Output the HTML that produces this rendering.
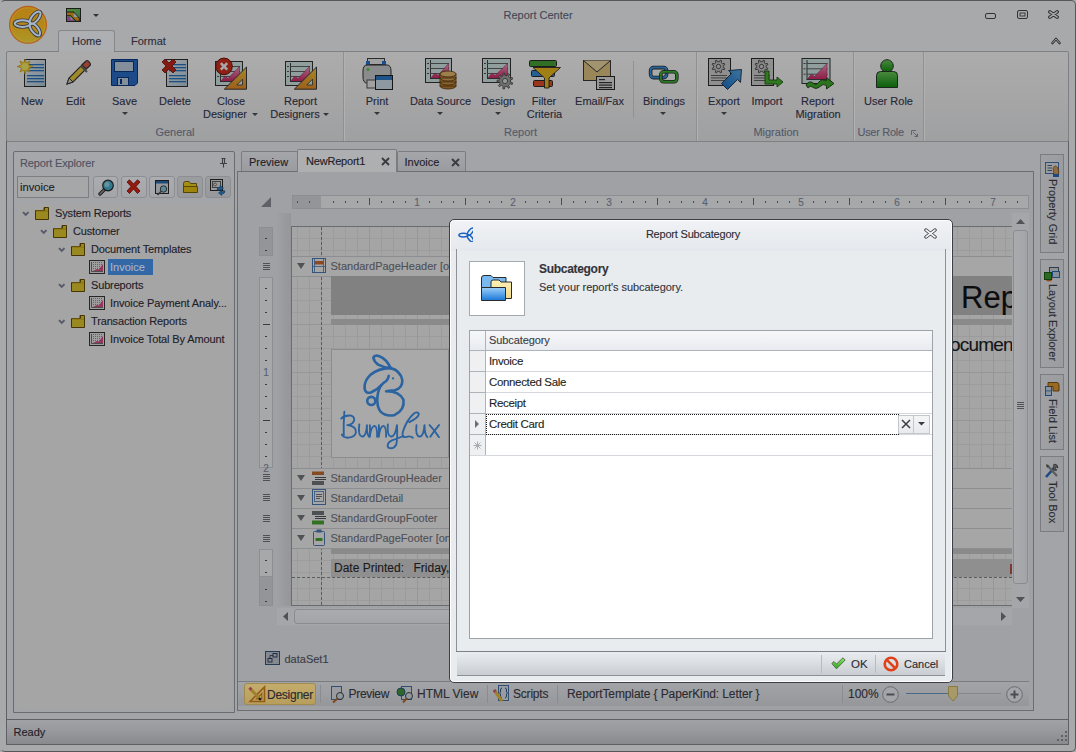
<!DOCTYPE html>
<html><head><meta charset="utf-8"><style>
*{box-sizing:border-box;margin:0;padding:0}
html,body{width:1076px;height:752px;overflow:hidden}
body{position:relative;background:#a7a8aa;font-family:"Liberation Sans",sans-serif;font-size:11px;color:#2e3036}
.a{position:absolute}
.t{position:absolute;white-space:nowrap;line-height:13px;-webkit-text-stroke:0.12px currentColor}
.dim{filter:brightness(.66)}
</style></head><body>
<div class="a" style="left:0px;top:0px;width:1076px;height:752px;border:1px solid #55575b;border-left-color:#a8a9ab;border-radius:5px;background:#a8a9ab"></div>
<div class="t" style="left:438px;width:200px;text-align:center;top:8.7px;font-size:11px;color:#424856;">Report Center</div>
<svg class="a" style="left:8px;top:5px;" width="40" height="40" viewBox="0 0 40 40">
<defs><linearGradient id="orbg" x1="0" y1="0" x2="0" y2="1"><stop offset="0" stop-color="#b88014"/><stop offset=".55" stop-color="#b48818"/><stop offset="1" stop-color="#aa982a"/></linearGradient></defs>
<circle cx="20" cy="19.8" r="18.4" fill="url(#orbg)" stroke="#b8601a" stroke-width="1.2"/>
<circle cx="20" cy="19.8" r="17" fill="none" stroke="#c8a040" stroke-width=".6" opacity=".7"/>
<g fill="none" stroke="#3c3c44" stroke-width="3.8"><ellipse cx="14.6" cy="18.6" rx="7.9" ry="3.3"/><ellipse cx="27.1" cy="12.8" rx="7.6" ry="3.3" transform="rotate(-50.6 27.1 12.8)"/><ellipse cx="26.9" cy="24.4" rx="7.4" ry="3.3" transform="rotate(52 26.9 24.4)"/></g>
<g fill="none" stroke="#a4b6c8" stroke-width="2.0"><ellipse cx="14.6" cy="18.6" rx="7.9" ry="3.3"/><ellipse cx="27.1" cy="12.8" rx="7.6" ry="3.3" transform="rotate(-50.6 27.1 12.8)"/><ellipse cx="26.9" cy="24.4" rx="7.4" ry="3.3" transform="rotate(52 26.9 24.4)"/></g></svg>
<svg class="a" style="left:66px;top:8px;filter:brightness(.66)" width="15" height="14" viewBox="0 0 15 14"><defs><linearGradient id="qg" x1="0" y1="0" x2="1" y2="1"><stop offset="0" stop-color="#78d858"/><stop offset=".6" stop-color="#68c060"/><stop offset="1" stop-color="#3a90e0"/></linearGradient></defs>
<rect x="0.5" y="0.5" width="14" height="13" fill="url(#qg)" stroke="#2a2a2a"/>
<path d="M1 3.6 H7.6 L13.6 9.8 V13.5 H9.8 L4.6 8 H1Z" fill="#2a2a2a"/>
<path d="M1 4.4 H7.2 L12.8 10 V12.8 H10.2 L4.8 7.2 H1Z" fill="#f0a018"/>
<path d="M7.8 4.8 L11.8 9 H7.8Z" fill="#d8e8f0"/>
<path d="M1 8.4 H3.8 L8.6 13.1 H1Z" fill="#c068c0"/>
<path d="M4.6 9 L7 11.4 H4.6Z" fill="#d8e8f0"/></svg>
<svg class="a" style="left:93px;top:14px;" width="7" height="4" viewBox="0 0 7 4"><path d="M0 0 L6 0 L3 3Z" fill="#303236"/></svg>
<svg class="a" style="left:985px;top:13px;" width="12" height="7" viewBox="0 0 12 7"><rect x="0.5" y="0.5" width="10" height="5" rx="1.5" fill="none" stroke="#303236"/></svg>
<svg class="a" style="left:1017px;top:10px;" width="12" height="10" viewBox="0 0 12 10"><rect x="0.5" y="0.5" width="10" height="8" rx="1.5" fill="none" stroke="#303236"/><rect x="3" y="3" width="5" height="3" fill="none" stroke="#303236" stroke-width=".9"/></svg>
<svg class="a" style="left:1048px;top:10px;" width="11" height="9" viewBox="0 0 11 9"><path d="M1.9 1.9 L9.1 7.1 M9.1 1.9 L1.9 7.1" stroke="#303236" stroke-width="3.6" stroke-linecap="round"/><path d="M1.9 1.9 L9.1 7.1 M9.1 1.9 L1.9 7.1" stroke="#a8a9ab" stroke-width="1.5" stroke-linecap="round"/></svg>
<div class="a" style="left:58px;top:30px;width:57px;height:22px;border:1px solid #85878b;border-bottom:none;border-radius:3px 3px 0 0;background:linear-gradient(#aeafb2,#adaeb1)"></div>
<div class="t" style="left:72px;top:35.2px;font-size:11px;color:#2c2d3a;">Home</div>
<div class="t" style="left:131px;top:35.2px;font-size:11px;color:#2c2d3a;">Format</div>
<svg class="a" style="left:1051px;top:37px;" width="10" height="8" viewBox="0 0 10 8"><path d="M1.5 6 L5 2 L8.5 6" fill="none" stroke="#303236" stroke-width="2.6" stroke-linejoin="round" stroke-linecap="round"/><path d="M1.5 6 L5 2 L8.5 6" fill="none" stroke="#a8a9ab" stroke-width="0.9" stroke-linecap="round"/></svg>
<div class="a" style="left:6px;top:141px;width:1063px;height:579px;border-left:1px solid #5e6064;border-right:1px solid #5e6064;background:#a3a4a7"></div>
<div class="a" style="left:6px;top:51px;width:1063px;height:91px;border:1px solid #7e8084;border-radius:2px;background:linear-gradient(#acacad,#a5a5a6 60%,#9fa0a1)"></div>
<div class="a" style="left:59px;top:51px;width:55px;height:1px;background:#acacad"></div>
<div class="a" style="left:343px;top:52px;width:1px;height:89px;background:#8e9094"></div>
<div class="a" style="left:344px;top:52px;width:1px;height:89px;background:#b0b1b3"></div>
<div class="a" style="left:696px;top:52px;width:1px;height:89px;background:#8e9094"></div>
<div class="a" style="left:697px;top:52px;width:1px;height:89px;background:#b0b1b3"></div>
<div class="a" style="left:853px;top:52px;width:1px;height:89px;background:#8e9094"></div>
<div class="a" style="left:854px;top:52px;width:1px;height:89px;background:#b0b1b3"></div>
<div class="a" style="left:923px;top:52px;width:1px;height:89px;background:#8e9094"></div>
<div class="a" style="left:924px;top:52px;width:1px;height:89px;background:#b0b1b3"></div>
<div class="a" style="left:633px;top:61px;width:1px;height:57px;background:#909296"></div>
<div class="t" style="left:75px;width:200px;text-align:center;top:126.2px;font-size:11px;color:#545a6a;">General</div>
<div class="t" style="left:420.5px;width:200px;text-align:center;top:126.2px;font-size:11px;color:#545a6a;">Report</div>
<div class="t" style="left:676px;width:200px;text-align:center;top:126.2px;font-size:11px;color:#545a6a;">Migration</div>
<div class="t" style="left:857.5px;top:126.2px;font-size:11px;color:#545a6a;letter-spacing:-0.3px">User Role</div>
<svg class="a" style="left:911px;top:130px;" width="8" height="8" viewBox="0 0 8 8"><path d="M0.5 0.5 H5 M0.5 0.5 V5" stroke="#5e6474" fill="none"/><path d="M2 2 L6.5 6.5 M3.5 6.5 H6.5 V3.5" stroke="#5e6474" fill="none"/></svg>
<svg class="a" style="left:16px;top:57px;filter:brightness(.66)" width="32" height="32" viewBox="0 0 32 32"><defs><linearGradient id="docg" x1="0" y1="0" x2="1" y2="1"><stop offset="0" stop-color="#f4f8fb"/><stop offset="1" stop-color="#b9cfe0"/></linearGradient></defs><rect x="8.5" y="2.5" width="21" height="27" fill="url(#docg)" stroke="#2e2e2e"/><rect x="11" y="7" width="17" height="1.3" fill="#2a78c4"/><rect x="11" y="10" width="17" height="1.3" fill="#2a78c4"/><rect x="11" y="13" width="17" height="1.3" fill="#2a78c4"/><rect x="11" y="18" width="17" height="1.3" fill="#2a78c4"/><rect x="11" y="21" width="17" height="1.3" fill="#2a78c4"/><rect x="11" y="24" width="17" height="1.3" fill="#2a78c4"/><path d="M9 2 L10.3 6 L14 4 L12.5 8 L17 9.5 L12.5 11 L14 15 L10.3 13 L9 17 L7.7 13 L4 15 L5.5 11 L1 9.5 L5.5 8 L4 4 L7.7 6Z" fill="#ffe030" stroke="#d8a000" stroke-width=".7"/><circle cx="9" cy="9.5" r="3.5" fill="#fff470"/></svg>
<div class="t" style="left:-68px;width:200px;text-align:center;top:94.7px;font-size:11px;color:#262736;">New</div>
<svg class="a" style="left:60px;top:57px;filter:brightness(.66)" width="32" height="32" viewBox="0 0 32 32"><path d="M7 27 L9 21 L24 6 L28 10 L13 25Z" fill="#f2d040" stroke="#3a3a3a" stroke-width="1.2"/><path d="M22 8 L26 4 Q28 3 29 5 L30 6 Q31 8 29.5 9 L26 12Z" fill="#e8604a" stroke="#3a3a3a" stroke-width="1.2"/><path d="M21 9 L27 15" stroke="#6a6a6a" stroke-width="2"/><path d="M7 27 L9 21 L13 25Z" fill="#d8d8d8" stroke="#3a3a3a" stroke-width="1"/></svg>
<div class="t" style="left:-24.5px;width:200px;text-align:center;top:94.7px;font-size:11px;color:#262736;">Edit</div>
<svg class="a" style="left:108px;top:57px;filter:brightness(.66)" width="32" height="32" viewBox="0 0 32 32"><path d="M3.5 2.5 H29.5 V26 L27 28.5 H3.5Z" fill="#2c72d0" stroke="#0c3c8c"/><rect x="6.5" y="4.5" width="19" height="10" fill="#c6d8ea" stroke="#0c3c8c"/><rect x="9.5" y="20.5" width="11" height="8" fill="#c6d8ea" stroke="#0c3c8c"/><rect x="12" y="22" width="2" height="5" fill="#0c3c8c"/></svg>
<div class="t" style="left:24.5px;width:200px;text-align:center;top:94.7px;font-size:11px;color:#262736;">Save</div>
<svg class="a" style="left:121.5px;top:112px;" width="7" height="4" viewBox="0 0 7 4"><path d="M0 0 L6 0 L3 3Z" fill="#34363a"/></svg>
<svg class="a" style="left:159px;top:57px;filter:brightness(.66)" width="32" height="32" viewBox="0 0 32 32"><defs><linearGradient id="docg" x1="0" y1="0" x2="1" y2="1"><stop offset="0" stop-color="#f4f8fb"/><stop offset="1" stop-color="#b9cfe0"/></linearGradient></defs><rect x="7.5" y="2.5" width="21" height="27" fill="url(#docg)" stroke="#2e2e2e"/><rect x="10" y="7" width="17" height="1.3" fill="#2a78c4"/><rect x="10" y="10" width="17" height="1.3" fill="#2a78c4"/><rect x="10" y="13" width="17" height="1.3" fill="#2a78c4"/><rect x="10" y="18" width="17" height="1.3" fill="#2a78c4"/><rect x="10" y="21" width="17" height="1.3" fill="#2a78c4"/><rect x="10" y="24" width="17" height="1.3" fill="#2a78c4"/><path d="M3 5 L6 2 L10 6 L14 2 L17 5 L13 9 L17 13 L14 16 L10 12 L6 16 L3 13 L7 9Z" fill="#c8281c" stroke="#7a1008" stroke-width=".8"/></svg>
<div class="t" style="left:75px;width:200px;text-align:center;top:94.7px;font-size:11px;color:#262736;">Delete</div>
<svg class="a" style="left:215px;top:57px;filter:brightness(.66)" width="34" height="34" viewBox="0 0 34 34"><defs><linearGradient id="pk" x1="0" y1="0" x2="0" y2="1"><stop offset="0" stop-color="#f8a0c8"/><stop offset="1" stop-color="#d82868"/></linearGradient><linearGradient id="tg" x1="0" y1="0" x2="0" y2="1"><stop offset="0" stop-color="#f8d040"/><stop offset="1" stop-color="#f09028"/></linearGradient></defs><rect x="0.5" y="4.5" width="27" height="24" fill="#dcefef" stroke="#333" stroke-width="1"/><path d="M5.5 6 V24" stroke="#444" stroke-width="1"/><path d="M5 9.5 H25" stroke="#555" stroke-width=".9"/><path d="M2 9.5 H4" stroke="#555" stroke-width="1"/><path d="M5 14.5 H25" stroke="#555" stroke-width=".9"/><path d="M2 14.5 H4" stroke="#555" stroke-width="1"/><path d="M5 19.5 H25" stroke="#555" stroke-width=".9"/><path d="M2 19.5 H4" stroke="#555" stroke-width="1"/><path d="M5.5 24.5 L10 19 L13 21.5 L24.5 9.5 V24.5Z" fill="url(#pk)" stroke="#902050" stroke-width=".5"/><path d="M5 24.5 H25" stroke="#444" stroke-width="1"/><path d="M9.3 32.2 H31.5 V10Z" fill="url(#tg)" stroke="#3a3a3a" stroke-width="1"/><path d="M21.8 28 H27.5 V22.2Z" fill="#dcefef" stroke="#3a3a3a" stroke-width=".8"/><circle cx="9" cy="9.4" r="8.3" fill="#d83020" stroke="#701008"/><path d="M5.8 6.2 L12.2 12.6 M12.2 6.2 L5.8 12.6" stroke="#fff" stroke-width="2.6"/></svg>
<div class="t" style="left:131px;width:200px;text-align:center;top:94.7px;font-size:11px;color:#262736;">Close</div>
<div class="t" style="left:125px;width:200px;text-align:center;top:107.7px;font-size:11px;color:#262736;">Designer</div>
<svg class="a" style="left:251.5px;top:113px;" width="7" height="4" viewBox="0 0 7 4"><path d="M0 0 L6 0 L3 3Z" fill="#34363a"/></svg>
<svg class="a" style="left:285px;top:57px;filter:brightness(.66)" width="34" height="34" viewBox="0 0 34 34"><defs><linearGradient id="pk" x1="0" y1="0" x2="0" y2="1"><stop offset="0" stop-color="#f8a0c8"/><stop offset="1" stop-color="#d82868"/></linearGradient><linearGradient id="tg" x1="0" y1="0" x2="0" y2="1"><stop offset="0" stop-color="#f8d040"/><stop offset="1" stop-color="#f09028"/></linearGradient></defs><rect x="0.5" y="4.5" width="27" height="24" fill="#dcefef" stroke="#333" stroke-width="1"/><path d="M5.5 6 V24" stroke="#444" stroke-width="1"/><path d="M5 9.5 H25" stroke="#555" stroke-width=".9"/><path d="M2 9.5 H4" stroke="#555" stroke-width="1"/><path d="M5 14.5 H25" stroke="#555" stroke-width=".9"/><path d="M2 14.5 H4" stroke="#555" stroke-width="1"/><path d="M5 19.5 H25" stroke="#555" stroke-width=".9"/><path d="M2 19.5 H4" stroke="#555" stroke-width="1"/><path d="M5.5 24.5 L10 19 L13 21.5 L24.5 9.5 V24.5Z" fill="url(#pk)" stroke="#902050" stroke-width=".5"/><path d="M5 24.5 H25" stroke="#444" stroke-width="1"/><path d="M9.3 32.2 H31.5 V10Z" fill="url(#tg)" stroke="#3a3a3a" stroke-width="1"/><path d="M21.8 28 H27.5 V22.2Z" fill="#dcefef" stroke="#3a3a3a" stroke-width=".8"/></svg>
<div class="t" style="left:200.5px;width:200px;text-align:center;top:94.7px;font-size:11px;color:#262736;">Report</div>
<div class="t" style="left:195px;width:200px;text-align:center;top:107.7px;font-size:11px;color:#262736;">Designers</div>
<svg class="a" style="left:323px;top:113px;" width="7" height="4" viewBox="0 0 7 4"><path d="M0 0 L6 0 L3 3Z" fill="#34363a"/></svg>
<svg class="a" style="left:361px;top:57px;filter:brightness(.66)" width="34" height="34" viewBox="0 0 34 34"><rect x="6.5" y="1.5" width="17" height="6" fill="#f4f4f4" stroke="#444"/><rect x="5" y="4" width="4" height="5" fill="#2a78d8"/><rect x="21" y="4" width="4" height="5" fill="#2a78d8"/><path d="M6 8 H26 Q30 8 30 14 V26 H6 Q2 26 2 20 V14 Q2 8 6 8Z" fill="#cfd2d4" stroke="#333"/><circle cx="7" cy="12.5" r="1.5" fill="#5ad040"/><rect x="6" y="23" width="10" height="8" fill="#f4f4f4" stroke="#555"/><rect x="14.5" y="18.5" width="17" height="14" fill="#d6e6f2" stroke="#222"/><rect x="15" y="19" width="16" height="4" fill="#2a80d0"/></svg>
<div class="t" style="left:277px;width:200px;text-align:center;top:94.7px;font-size:11px;color:#262736;">Print</div>
<svg class="a" style="left:373.5px;top:112px;" width="7" height="4" viewBox="0 0 7 4"><path d="M0 0 L6 0 L3 3Z" fill="#34363a"/></svg>
<svg class="a" style="left:424px;top:57px;filter:brightness(.66)" width="36" height="34" viewBox="0 0 36 34"><defs><linearGradient id="pk" x1="0" y1="0" x2="0" y2="1"><stop offset="0" stop-color="#f8a0c8"/><stop offset="1" stop-color="#d82868"/></linearGradient><linearGradient id="tg" x1="0" y1="0" x2="0" y2="1"><stop offset="0" stop-color="#f8d040"/><stop offset="1" stop-color="#f09028"/></linearGradient></defs><rect x="1.5" y="1.5" width="26" height="24" fill="#dcefef" stroke="#333" stroke-width="1"/><path d="M6.5 3 V21" stroke="#444" stroke-width="1"/><path d="M6 6.5 H25" stroke="#555" stroke-width=".9"/><path d="M3 6.5 H5" stroke="#555" stroke-width="1"/><path d="M6 11.5 H25" stroke="#555" stroke-width=".9"/><path d="M3 11.5 H5" stroke="#555" stroke-width="1"/><path d="M6 16.5 H25" stroke="#555" stroke-width=".9"/><path d="M3 16.5 H5" stroke="#555" stroke-width="1"/><path d="M6.5 21.5 L11 16 L14 18.5 L24.5 6.5 V21.5Z" fill="url(#pk)" stroke="#902050" stroke-width=".5"/><path d="M6 21.5 H25" stroke="#444" stroke-width="1"/><g stroke="#5a3a10" stroke-width=".8"><ellipse cx="24" cy="29" rx="8" ry="3" fill="#c08030"/><rect x="16" y="25" width="16" height="4" fill="#d09040"/><ellipse cx="24" cy="25" rx="8" ry="3" fill="#d89a48"/><rect x="16" y="21" width="16" height="4" fill="#d09040"/><ellipse cx="24" cy="21" rx="8" ry="3" fill="#e0aa58"/><rect x="16" y="17" width="16" height="4" fill="#d09040"/><ellipse cx="24" cy="17" rx="8" ry="3" fill="#f0c070"/></g></svg>
<div class="t" style="left:340.5px;width:200px;text-align:center;top:94.7px;font-size:11px;color:#262736;">Data Source</div>
<svg class="a" style="left:436.5px;top:112px;" width="7" height="4" viewBox="0 0 7 4"><path d="M0 0 L6 0 L3 3Z" fill="#34363a"/></svg>
<svg class="a" style="left:482px;top:57px;filter:brightness(.66)" width="34" height="34" viewBox="0 0 34 34"><defs><linearGradient id="pk" x1="0" y1="0" x2="0" y2="1"><stop offset="0" stop-color="#f8a0c8"/><stop offset="1" stop-color="#d82868"/></linearGradient><linearGradient id="tg" x1="0" y1="0" x2="0" y2="1"><stop offset="0" stop-color="#f8d040"/><stop offset="1" stop-color="#f09028"/></linearGradient></defs><rect x="0.5" y="1.5" width="28" height="24" fill="#dcefef" stroke="#333" stroke-width="1"/><path d="M5.5 3 V21" stroke="#444" stroke-width="1"/><path d="M5 6.5 H26" stroke="#555" stroke-width=".9"/><path d="M2 6.5 H4" stroke="#555" stroke-width="1"/><path d="M5 11.5 H26" stroke="#555" stroke-width=".9"/><path d="M2 11.5 H4" stroke="#555" stroke-width="1"/><path d="M5 16.5 H26" stroke="#555" stroke-width=".9"/><path d="M2 16.5 H4" stroke="#555" stroke-width="1"/><path d="M5.5 21.5 L10 16 L13 18.5 L25.5 6.5 V21.5Z" fill="url(#pk)" stroke="#902050" stroke-width=".5"/><path d="M5 21.5 H26" stroke="#444" stroke-width="1"/><path d="M28.60 24.00 L28.50 25.07 L30.76 25.96 L30.20 27.48 L27.90 26.71 L27.29 27.60 L26.52 28.35 L27.68 30.49 L26.28 31.30 L25.01 29.23 L23.97 29.51 L22.90 29.60 L22.41 31.98 L20.82 31.70 L21.18 29.29 L20.20 28.85 L19.33 28.23 L17.42 29.74 L16.38 28.50 L18.20 26.88 L17.74 25.92 L17.47 24.88 L15.04 24.81 L15.04 23.19 L17.47 23.12 L17.74 22.08 L18.20 21.12 L16.38 19.50 L17.42 18.26 L19.33 19.77 L20.20 19.15 L21.18 18.71 L20.82 16.30 L22.41 16.02 L22.90 18.40 L23.97 18.49 L25.01 18.77 L26.28 16.70 L27.68 17.51 L26.52 19.65 L27.29 20.40 L27.90 21.29 L30.20 20.52 L30.76 22.04 L28.50 22.93Z" fill="#a8a8a8" stroke="#555" stroke-width=".9"/><circle cx="23" cy="24" r="2.6" fill="#dfeaee" stroke="#555" stroke-width=".9"/></svg>
<div class="t" style="left:398px;width:200px;text-align:center;top:94.7px;font-size:11px;color:#262736;">Design</div>
<svg class="a" style="left:494.5px;top:112px;" width="7" height="4" viewBox="0 0 7 4"><path d="M0 0 L6 0 L3 3Z" fill="#34363a"/></svg>
<svg class="a" style="left:528px;top:57px;filter:brightness(.66)" width="34" height="34" viewBox="0 0 34 34"><rect x="1.5" y="3.5" width="27" height="6" rx="1" fill="#4aa838" stroke="#2a2a2a"/><rect x="3.5" y="13.5" width="23" height="6" rx="1" fill="#3a90e0" stroke="#2a2a2a"/><rect x="5.5" y="23.5" width="19" height="6" rx="1" fill="#e8502a" stroke="#2a2a2a"/><path d="M5 10.5 H32.5 L21 21 V31 H16.5 V21Z" fill="#f2c020" stroke="#2a2a2a" stroke-width=".9"/></svg>
<div class="t" style="left:444px;width:200px;text-align:center;top:94.7px;font-size:11px;color:#262736;">Filter</div>
<div class="t" style="left:444.5px;width:200px;text-align:center;top:107.7px;font-size:11px;color:#262736;">Criteria</div>
<svg class="a" style="left:582px;top:57px;filter:brightness(.66)" width="34" height="34" viewBox="0 0 34 34"><rect x="1.5" y="3.5" width="27" height="20" fill="#e8cc88" stroke="#3a3a3a"/><path d="M1.5 3.5 L15 15 L28.5 3.5" fill="#f4e0a8" stroke="#3a3a3a"/><rect x="14.5" y="19.5" width="18" height="13" fill="#e8e8e8" stroke="#2a2a2a"/><rect x="17" y="22" width="6" height="1.2" fill="#333"/><rect x="17" y="25" width="13" height="1.2" fill="#333"/><rect x="17" y="27.5" width="13" height="1.2" fill="#333"/><rect x="17" y="30" width="13" height="1.2" fill="#333"/></svg>
<div class="t" style="left:499.5px;width:200px;text-align:center;top:94.7px;font-size:11px;color:#262736;">Email/Fax</div>
<svg class="a" style="left:648px;top:65px;filter:brightness(.66)" width="32" height="20" viewBox="0 0 32 20"><rect x="2.6" y="2.6" width="16" height="10" rx="3" fill="none" stroke="#2a2a2a" stroke-width="3.6"/><rect x="2.6" y="2.6" width="16" height="10" rx="3" fill="none" stroke="#3a98e8" stroke-width="2"/><rect x="12.8" y="6.8" width="16" height="10" rx="3" fill="none" stroke="#2a2a2a" stroke-width="3.6"/><rect x="12.8" y="6.8" width="16" height="10" rx="3" fill="none" stroke="#40b838" stroke-width="2"/></svg>
<div class="t" style="left:564px;width:200px;text-align:center;top:94.7px;font-size:11px;color:#262736;">Bindings</div>
<svg class="a" style="left:660px;top:112px;" width="7" height="4" viewBox="0 0 7 4"><path d="M0 0 L6 0 L3 3Z" fill="#34363a"/></svg>
<svg class="a" style="left:708px;top:57px;filter:brightness(.66)" width="34" height="34" viewBox="0 0 34 34"><rect x="0.5" y="1.5" width="22" height="27" fill="#d8d8d8" stroke="#2a2a2a"/><path d="M15.30 9.50 L15.19 10.53 L16.85 11.32 L16.27 12.70 L14.54 12.09 L13.89 12.89 L13.09 13.54 L13.70 15.27 L12.32 15.85 L11.53 14.19 L10.50 14.30 L9.47 14.19 L8.68 15.85 L7.30 15.27 L7.91 13.54 L7.11 12.89 L6.46 12.09 L4.73 12.70 L4.15 11.32 L5.81 10.53 L5.70 9.50 L5.81 8.47 L4.15 7.68 L4.73 6.30 L6.46 6.91 L7.11 6.11 L7.91 5.46 L7.30 3.73 L8.68 3.15 L9.47 4.81 L10.50 4.70 L11.53 4.81 L12.32 3.15 L13.70 3.73 L13.09 5.46 L13.89 6.11 L14.54 6.91 L16.27 6.30 L16.85 7.68 L15.19 8.47Z" fill="#cfcfcf" stroke="#444" stroke-width=".9"/><circle cx="10.5" cy="9.5" r="2.2" fill="#d8d8d8" stroke="#444" stroke-width=".9"/><rect x="3" y="18" width="16" height=".9" fill="#555"/><rect x="3" y="20.5" width="16" height=".9" fill="#555"/><rect x="3" y="23" width="16" height=".9" fill="#555"/><defs><linearGradient id="ag" x1="0" y1="1" x2="1" y2="0"><stop offset="0" stop-color="#1a70c8"/><stop offset="1" stop-color="#60b0f0"/></linearGradient></defs><path d="M19.5 32.5 L29.5 22.5 L32.5 25.5 L33.5 12.5 L20.5 13.5 L23.5 16.5 L13.5 26.5Z" fill="url(#ag)" stroke="#1a3050" stroke-width=".9" stroke-linejoin="round"/></svg>
<div class="t" style="left:624px;width:200px;text-align:center;top:94.7px;font-size:11px;color:#262736;">Export</div>
<svg class="a" style="left:720.5px;top:112px;" width="7" height="4" viewBox="0 0 7 4"><path d="M0 0 L6 0 L3 3Z" fill="#34363a"/></svg>
<svg class="a" style="left:751px;top:57px;filter:brightness(.66)" width="34" height="34" viewBox="0 0 34 34"><rect x="0.5" y="1.5" width="22" height="27" fill="#d8d8d8" stroke="#2a2a2a"/><path d="M15.30 9.50 L15.19 10.53 L16.85 11.32 L16.27 12.70 L14.54 12.09 L13.89 12.89 L13.09 13.54 L13.70 15.27 L12.32 15.85 L11.53 14.19 L10.50 14.30 L9.47 14.19 L8.68 15.85 L7.30 15.27 L7.91 13.54 L7.11 12.89 L6.46 12.09 L4.73 12.70 L4.15 11.32 L5.81 10.53 L5.70 9.50 L5.81 8.47 L4.15 7.68 L4.73 6.30 L6.46 6.91 L7.11 6.11 L7.91 5.46 L7.30 3.73 L8.68 3.15 L9.47 4.81 L10.50 4.70 L11.53 4.81 L12.32 3.15 L13.70 3.73 L13.09 5.46 L13.89 6.11 L14.54 6.91 L16.27 6.30 L16.85 7.68 L15.19 8.47Z" fill="#cfcfcf" stroke="#444" stroke-width=".9"/><circle cx="10.5" cy="9.5" r="2.2" fill="#d8d8d8" stroke="#444" stroke-width=".9"/><rect x="3" y="18" width="16" height=".9" fill="#555"/><rect x="3" y="20.5" width="16" height=".9" fill="#555"/><rect x="3" y="23" width="16" height=".9" fill="#555"/><path d="M14 14 H18 V23 H26 V20 L32 25 L26 30 V27 H14Z" fill="#4ab830" stroke="#1e5a10" stroke-width=".9"/></svg>
<div class="t" style="left:667px;width:200px;text-align:center;top:94.7px;font-size:11px;color:#262736;">Import</div>
<svg class="a" style="left:801px;top:57px;filter:brightness(.66)" width="34" height="34" viewBox="0 0 34 34"><defs><linearGradient id="pk" x1="0" y1="0" x2="0" y2="1"><stop offset="0" stop-color="#f8a0c8"/><stop offset="1" stop-color="#d82868"/></linearGradient><linearGradient id="tg" x1="0" y1="0" x2="0" y2="1"><stop offset="0" stop-color="#f8d040"/><stop offset="1" stop-color="#f09028"/></linearGradient></defs><rect x="1.0" y="1.5" width="28" height="25" fill="#dcefef" stroke="#333" stroke-width="1"/><path d="M6.0 3 V22" stroke="#444" stroke-width="1"/><path d="M5.5 6.5 H26.5" stroke="#555" stroke-width=".9"/><path d="M2.5 6.5 H4.5" stroke="#555" stroke-width="1"/><path d="M5.5 11.8 H26.5" stroke="#555" stroke-width=".9"/><path d="M2.5 11.8 H4.5" stroke="#555" stroke-width="1"/><path d="M5.5 17.2 H26.5" stroke="#555" stroke-width=".9"/><path d="M2.5 17.2 H4.5" stroke="#555" stroke-width="1"/><path d="M6.0 22.5 L10.5 17 L13.5 19.5 L26.0 6.5 V22.5Z" fill="url(#pk)" stroke="#902050" stroke-width=".5"/><path d="M5.5 22.5 H26.5" stroke="#444" stroke-width="1"/><path d="M5 28 Q8 23 12 26 Q15 29 18 25 Q21 21 25 24 L26 21 L33 26.5 L25.5 32 L25.5 28.5 Q22 26 19 29.5 Q15 33 11.5 30 Q9 28 7 31Z" fill="#40b030" stroke="#1a4010" stroke-width=".9" stroke-linejoin="round"/></svg>
<div class="t" style="left:717.5px;width:200px;text-align:center;top:94.7px;font-size:11px;color:#262736;">Report</div>
<div class="t" style="left:718px;width:200px;text-align:center;top:107.7px;font-size:11px;color:#262736;">Migration</div>
<svg class="a" style="left:874px;top:57px;filter:brightness(.66)" width="28" height="32" viewBox="0 0 28 32"><defs><linearGradient id="ug" x1="0" y1="0" x2="0" y2="1"><stop offset="0" stop-color="#70d060"/><stop offset="1" stop-color="#109010"/></linearGradient></defs><circle cx="13" cy="9" r="6.3" fill="url(#ug)" stroke="#2a3a2a"/><path d="M2.5 30.5 V18.5 Q2.5 14.5 6.5 14.5 H19.5 Q23.5 14.5 23.5 18.5 V30.5Z" fill="url(#ug)" stroke="#2a3a2a"/></svg>
<div class="t" style="left:788.5px;width:200px;text-align:center;top:94.7px;font-size:11px;color:#262736;">User Role</div>
<div class="a" style="left:6px;top:719px;width:1063px;height:26px;border:1px solid #5e6064;background:linear-gradient(#a1a2a5,#97989b 50%,#898a8d)"></div>
<div class="t" style="left:13.5px;top:725.7px;font-size:11px;color:#1e2028;">Ready</div>
<svg class="a" style="left:1056px;top:731px;" width="12" height="11" viewBox="0 0 12 11"><rect x="9" y="0" width="2" height="2" fill="#606266"/><rect x="5" y="4" width="2" height="2" fill="#606266"/><rect x="9" y="4" width="2" height="2" fill="#606266"/><rect x="1" y="8" width="2" height="2" fill="#606266"/><rect x="5" y="8" width="2" height="2" fill="#606266"/><rect x="9" y="8" width="2" height="2" fill="#606266"/></svg>
<div class="a" style="left:13px;top:151px;width:222px;height:562px;border:1px solid #6a6c70;border-radius:2px 2px 0 0;background:linear-gradient(#a6a7aa,#a3a4a7 60px)"></div>
<div class="t" style="left:20px;top:156.7px;font-size:11px;color:#4e5262;letter-spacing:-0.15px">Report Explorer</div>
<svg class="a" style="left:219px;top:157px;" width="9" height="11" viewBox="0 0 9 11"><path d="M2.5 1.5 H6.5 M3.5 1.5 V6.5 H5.5 V1.5 M1 6.5 H8 M4.5 6.5 V10.5" fill="none" stroke="#3c3e44" stroke-width="1.1"/></svg>
<div class="a" style="left:17px;top:176px;width:72px;height:22px;border:1px solid #7c7e82;background:#a6a7a8"></div>
<div class="t" style="left:20px;top:180.6px;font-size:11.2px;color:#1c1e26;">invoice</div>
<div class="a" style="left:93px;top:176px;width:25px;height:22px;border:1px solid #8c8e92;border-radius:3px;background:linear-gradient(#acadb0,#a4a5a8)"></div>
<div class="a" style="left:121px;top:176px;width:26px;height:22px;border:1px solid #8c8e92;border-radius:3px;background:linear-gradient(#acadb0,#a4a5a8)"></div>
<div class="a" style="left:149px;top:176px;width:26px;height:22px;border:1px solid #8c8e92;border-radius:3px;background:linear-gradient(#acadb0,#a4a5a8)"></div>
<div class="a" style="left:177px;top:176px;width:26px;height:22px;border:1px solid #8c8e92;border-radius:3px;background:linear-gradient(#9c9da0,#98999c)"></div>
<div class="a" style="left:205px;top:176px;width:26px;height:22px;border:1px solid #8c8e92;border-radius:3px;background:linear-gradient(#9c9da0,#98999c)"></div>
<svg class="a" style="left:97px;top:178px;filter:brightness(.66)" width="18" height="18" viewBox="0 0 18 18"><path d="M3 16 L8 11" stroke="#2a2a2a" stroke-width="3.4" stroke-linecap="round"/><path d="M3 16 L8 11" stroke="#9a9a9a" stroke-width="1.6" stroke-linecap="round"/><circle cx="11" cy="7.5" r="5.3" fill="#4ab8d8" stroke="#2a2a2a" stroke-width="1.2"/><circle cx="10" cy="6.5" r="2.5" fill="#9ae0f0"/></svg>
<svg class="a" style="left:125px;top:179px;filter:brightness(.66)" width="17" height="16" viewBox="0 0 17 16"><path d="M2 3 L4.5 0.8 L8.5 5 L12.5 0.8 L15 3 L11 7.5 L15 12 L12.5 14.5 L8.5 10 L4.5 14.5 L2 12 L6 7.5Z" fill="#e02818" stroke="#801008" stroke-width=".8"/></svg>
<svg class="a" style="left:154px;top:179px;filter:brightness(.66)" width="17" height="17" viewBox="0 0 17 17"><rect x="1.5" y="1.5" width="13" height="13" fill="#e0e8f0" stroke="#2a2a2a"/><rect x="2" y="2" width="12" height="2.5" fill="#2a70b8"/><circle cx="9.5" cy="10" r="3.2" fill="#8ad0e8" stroke="#333" stroke-width=".9"/><path d="M7.2 12.3 L3.5 16" stroke="#555" stroke-width="1.6"/></svg>
<svg class="a" style="left:182px;top:180px;filter:brightness(.66)" width="17" height="14" viewBox="0 0 17 14"><path d="M1.5 3.5 Q1.5 1.5 3.5 1.5 H7 L8.5 3.5 H14.5 V12.5 H1.5Z" fill="#f8d820" stroke="#7a6000" stroke-width=".9"/><path d="M1.5 6.5 H15.5 V12.5 H1.5Z" fill="#f0c810" stroke="#7a6000" stroke-width=".9"/></svg>
<svg class="a" style="left:209px;top:178px;filter:brightness(.66)" width="18" height="18" viewBox="0 0 18 18"><rect x="1.5" y="1.5" width="12" height="11" fill="#e8e8e8" stroke="#2a2a2a"/><rect x="3.5" y="3.5" width="8" height="6" fill="none" stroke="#555" stroke-width=".9"/><circle cx="6" cy="6.5" r="1.5" fill="none" stroke="#555" stroke-width=".7"/><path d="M8 12 Q8 9 11.5 9 L11 7.5 L14.5 10 L11.5 12.5 L11.5 11 Q10 11 9.5 12.5Z" fill="#2a90e0" stroke="#1a4a80" stroke-width=".6"/><path d="M16 13 Q16 16 12.5 16 L13 17.5 L9.5 15 L12.5 12.5 L12.5 14 Q14 14 14.5 12.5Z" fill="#2a90e0" stroke="#1a4a80" stroke-width=".6"/></svg>
<div class="a" style="left:17px;top:204px;width:214px;height:505px;background:#a5a5a5"></div>
<svg class="a" style="left:22px;top:211px;" width="8" height="6" viewBox="0 0 8 6"><path d="M1 1.2 L3.75 4 L6.5 1.2" fill="none" stroke="#55596a" stroke-width="1.9"/></svg>
<svg class="a" style="left:35px;top:207px;filter:brightness(.66)" width="14" height="13" viewBox="0 0 14 13"><path d="M0.5 3.5 H9 V0.5 H13.5 V12.5 H0.5Z" fill="#e8d030" stroke="#6a5000"/><path d="M9.5 0.5 V3.5" stroke="#6a5000"/><path d="M1 4 H13" stroke="#c8a818" stroke-width="1"/></svg>
<div class="t" style="left:55px;top:207.0px;font-size:11px;color:#1e2028;letter-spacing:-0.15px">System Reports</div>
<svg class="a" style="left:40px;top:229px;" width="8" height="6" viewBox="0 0 8 6"><path d="M1 1.2 L3.75 4 L6.5 1.2" fill="none" stroke="#55596a" stroke-width="1.9"/></svg>
<svg class="a" style="left:53px;top:225px;filter:brightness(.66)" width="14" height="13" viewBox="0 0 14 13"><path d="M0.5 3.5 H9 V0.5 H13.5 V12.5 H0.5Z" fill="#e8d030" stroke="#6a5000"/><path d="M9.5 0.5 V3.5" stroke="#6a5000"/><path d="M1 4 H13" stroke="#c8a818" stroke-width="1"/></svg>
<div class="t" style="left:73px;top:225.0px;font-size:11px;color:#1e2028;letter-spacing:-0.15px">Customer</div>
<svg class="a" style="left:58px;top:247px;" width="8" height="6" viewBox="0 0 8 6"><path d="M1 1.2 L3.75 4 L6.5 1.2" fill="none" stroke="#55596a" stroke-width="1.9"/></svg>
<svg class="a" style="left:71px;top:243px;filter:brightness(.66)" width="14" height="13" viewBox="0 0 14 13"><path d="M0.5 3.5 H9 V0.5 H13.5 V12.5 H0.5Z" fill="#e8d030" stroke="#6a5000"/><path d="M9.5 0.5 V3.5" stroke="#6a5000"/><path d="M1 4 H13" stroke="#c8a818" stroke-width="1"/></svg>
<div class="t" style="left:91px;top:243.0px;font-size:11px;color:#1e2028;letter-spacing:-0.15px">Document Templates</div>
<svg class="a" style="left:89px;top:260px;filter:brightness(.66)" width="16" height="14" viewBox="0 0 16 14"><rect x="0.5" y="0.5" width="15" height="13" fill="#f0f0f0" stroke="#3a3a3a"/><rect x="4" y="2" width=".8" height=".8" fill="#666"/><rect x="4" y="4" width=".8" height=".8" fill="#666"/><rect x="4" y="6" width=".8" height=".8" fill="#666"/><rect x="4" y="8" width=".8" height=".8" fill="#666"/><rect x="6" y="2" width=".8" height=".8" fill="#666"/><rect x="6" y="4" width=".8" height=".8" fill="#666"/><rect x="6" y="6" width=".8" height=".8" fill="#666"/><rect x="6" y="8" width=".8" height=".8" fill="#666"/><rect x="8" y="2" width=".8" height=".8" fill="#666"/><rect x="8" y="4" width=".8" height=".8" fill="#666"/><rect x="8" y="6" width=".8" height=".8" fill="#666"/><rect x="8" y="8" width=".8" height=".8" fill="#666"/><rect x="10" y="2" width=".8" height=".8" fill="#666"/><rect x="10" y="4" width=".8" height=".8" fill="#666"/><rect x="10" y="6" width=".8" height=".8" fill="#666"/><rect x="10" y="8" width=".8" height=".8" fill="#666"/><rect x="12" y="2" width=".8" height=".8" fill="#666"/><rect x="12" y="4" width=".8" height=".8" fill="#666"/><rect x="12" y="6" width=".8" height=".8" fill="#666"/><rect x="12" y="8" width=".8" height=".8" fill="#666"/><path d="M2.5 2 V11.5 H14" stroke="#555" fill="none" stroke-width=".8"/><path d="M4 11 L8 9 L10 9.5 L14 4 V11Z" fill="#e0508a"/></svg>
<div class="a" style="left:108px;top:259px;width:45px;height:16px;background:#3268a6"></div>
<div class="t" style="left:110px;top:261.0px;font-size:11px;color:#a8b4c4;">Invoice</div>
<svg class="a" style="left:58px;top:283px;" width="8" height="6" viewBox="0 0 8 6"><path d="M1 1.2 L3.75 4 L6.5 1.2" fill="none" stroke="#55596a" stroke-width="1.9"/></svg>
<svg class="a" style="left:71px;top:279px;filter:brightness(.66)" width="14" height="13" viewBox="0 0 14 13"><path d="M0.5 3.5 H9 V0.5 H13.5 V12.5 H0.5Z" fill="#e8d030" stroke="#6a5000"/><path d="M9.5 0.5 V3.5" stroke="#6a5000"/><path d="M1 4 H13" stroke="#c8a818" stroke-width="1"/></svg>
<div class="t" style="left:91px;top:279.0px;font-size:11px;color:#1e2028;letter-spacing:-0.15px">Subreports</div>
<svg class="a" style="left:89px;top:296px;filter:brightness(.66)" width="16" height="14" viewBox="0 0 16 14"><rect x="0.5" y="0.5" width="15" height="13" fill="#f0f0f0" stroke="#3a3a3a"/><rect x="4" y="2" width=".8" height=".8" fill="#666"/><rect x="4" y="4" width=".8" height=".8" fill="#666"/><rect x="4" y="6" width=".8" height=".8" fill="#666"/><rect x="4" y="8" width=".8" height=".8" fill="#666"/><rect x="6" y="2" width=".8" height=".8" fill="#666"/><rect x="6" y="4" width=".8" height=".8" fill="#666"/><rect x="6" y="6" width=".8" height=".8" fill="#666"/><rect x="6" y="8" width=".8" height=".8" fill="#666"/><rect x="8" y="2" width=".8" height=".8" fill="#666"/><rect x="8" y="4" width=".8" height=".8" fill="#666"/><rect x="8" y="6" width=".8" height=".8" fill="#666"/><rect x="8" y="8" width=".8" height=".8" fill="#666"/><rect x="10" y="2" width=".8" height=".8" fill="#666"/><rect x="10" y="4" width=".8" height=".8" fill="#666"/><rect x="10" y="6" width=".8" height=".8" fill="#666"/><rect x="10" y="8" width=".8" height=".8" fill="#666"/><rect x="12" y="2" width=".8" height=".8" fill="#666"/><rect x="12" y="4" width=".8" height=".8" fill="#666"/><rect x="12" y="6" width=".8" height=".8" fill="#666"/><rect x="12" y="8" width=".8" height=".8" fill="#666"/><path d="M2.5 2 V11.5 H14" stroke="#555" fill="none" stroke-width=".8"/><path d="M4 11 L8 9 L10 9.5 L14 4 V11Z" fill="#e0508a"/></svg>
<div class="t" style="left:110px;top:297.0px;font-size:11px;color:#1e2028;letter-spacing:-0.12px">Invoice Payment Analy...</div>
<svg class="a" style="left:58px;top:319px;" width="8" height="6" viewBox="0 0 8 6"><path d="M1 1.2 L3.75 4 L6.5 1.2" fill="none" stroke="#55596a" stroke-width="1.9"/></svg>
<svg class="a" style="left:71px;top:315px;filter:brightness(.66)" width="14" height="13" viewBox="0 0 14 13"><path d="M0.5 3.5 H9 V0.5 H13.5 V12.5 H0.5Z" fill="#e8d030" stroke="#6a5000"/><path d="M9.5 0.5 V3.5" stroke="#6a5000"/><path d="M1 4 H13" stroke="#c8a818" stroke-width="1"/></svg>
<div class="t" style="left:91px;top:315.0px;font-size:11px;color:#1e2028;letter-spacing:-0.15px">Transaction Reports</div>
<svg class="a" style="left:89px;top:332px;filter:brightness(.66)" width="16" height="14" viewBox="0 0 16 14"><rect x="0.5" y="0.5" width="15" height="13" fill="#f0f0f0" stroke="#3a3a3a"/><rect x="4" y="2" width=".8" height=".8" fill="#666"/><rect x="4" y="4" width=".8" height=".8" fill="#666"/><rect x="4" y="6" width=".8" height=".8" fill="#666"/><rect x="4" y="8" width=".8" height=".8" fill="#666"/><rect x="6" y="2" width=".8" height=".8" fill="#666"/><rect x="6" y="4" width=".8" height=".8" fill="#666"/><rect x="6" y="6" width=".8" height=".8" fill="#666"/><rect x="6" y="8" width=".8" height=".8" fill="#666"/><rect x="8" y="2" width=".8" height=".8" fill="#666"/><rect x="8" y="4" width=".8" height=".8" fill="#666"/><rect x="8" y="6" width=".8" height=".8" fill="#666"/><rect x="8" y="8" width=".8" height=".8" fill="#666"/><rect x="10" y="2" width=".8" height=".8" fill="#666"/><rect x="10" y="4" width=".8" height=".8" fill="#666"/><rect x="10" y="6" width=".8" height=".8" fill="#666"/><rect x="10" y="8" width=".8" height=".8" fill="#666"/><rect x="12" y="2" width=".8" height=".8" fill="#666"/><rect x="12" y="4" width=".8" height=".8" fill="#666"/><rect x="12" y="6" width=".8" height=".8" fill="#666"/><rect x="12" y="8" width=".8" height=".8" fill="#666"/><path d="M2.5 2 V11.5 H14" stroke="#555" fill="none" stroke-width=".8"/><path d="M4 11 L8 9 L10 9.5 L14 4 V11Z" fill="#e0508a"/></svg>
<div class="t" style="left:110px;top:333.0px;font-size:11px;color:#1e2028;letter-spacing:-0.12px">Invoice Total By Amount</div>
<div class="a" style="left:241px;top:151px;width:57px;height:21px;border:1px solid #7a7c80;border-bottom:none;border-radius:2px 2px 0 0;background:linear-gradient(#a5a6a9,#9a9b9e)"></div>
<div class="t" style="left:249px;top:155.7px;font-size:11px;color:#1e2028;">Preview</div>
<div class="a" style="left:397px;top:151px;width:69px;height:21px;border:1px solid #7a7c80;border-bottom:none;border-radius:2px 2px 0 0;background:linear-gradient(#a5a6a9,#9a9b9e)"></div>
<div class="t" style="left:404.5px;top:155.7px;font-size:11px;color:#1e2028;">Invoice</div>
<svg class="a" style="left:451px;top:158px;" width="9" height="9" viewBox="0 0 9 9"><path d="M1 1 L8 8 M8 1 L1 8" stroke="#3a3c42" stroke-width="1.9"/></svg>
<div class="a" style="left:237px;top:171px;width:797px;height:540px;border:1px solid #6c6e72;background:#a0a1a4"></div>
<div class="a" style="left:297px;top:149px;width:100px;height:23px;border:1px solid #7a7c80;border-bottom:none;border-radius:2px 2px 0 0;background:#aeafb1"></div>
<div class="t" style="left:306px;top:154.7px;font-size:11px;color:#1e2028;letter-spacing:-0.2px">NewReport1</div>
<svg class="a" style="left:381px;top:157px;" width="9" height="9" viewBox="0 0 9 9"><path d="M1 1 L8 8 M8 1 L1 8" stroke="#3a3c42" stroke-width="1.9"/></svg>
<svg class="a" style="left:261px;top:197px;" width="11" height="11" viewBox="0 0 11 11"><path d="M10 0 V10 H0Z" fill="#5e6268"/></svg>
<div class="a" style="left:292px;top:195px;width:737px;height:14px;border:1px solid #8c8e92;background:#a7a8aa"></div>
<div class="a" style="left:293px;top:196px;width:28px;height:12px;background:#939598"></div>
<svg class="a" style="left:0;top:0" width="1076" height="752"><rect x="297" y="201" width="1" height="2" fill="#4a4c50"/><rect x="309" y="201" width="1" height="2" fill="#4a4c50"/><rect x="333" y="201" width="1" height="2" fill="#4a4c50"/><rect x="345" y="201" width="1" height="2" fill="#4a4c50"/><rect x="357" y="201" width="1" height="2" fill="#4a4c50"/><rect x="369" y="198" width="1" height="7" fill="#4a4c50"/><rect x="381" y="201" width="1" height="2" fill="#4a4c50"/><rect x="393" y="201" width="1" height="2" fill="#4a4c50"/><rect x="405" y="201" width="1" height="2" fill="#4a4c50"/><rect x="429" y="201" width="1" height="2" fill="#4a4c50"/><rect x="441" y="201" width="1" height="2" fill="#4a4c50"/><rect x="453" y="201" width="1" height="2" fill="#4a4c50"/><rect x="465" y="198" width="1" height="7" fill="#4a4c50"/><rect x="477" y="201" width="1" height="2" fill="#4a4c50"/><rect x="489" y="201" width="1" height="2" fill="#4a4c50"/><rect x="501" y="201" width="1" height="2" fill="#4a4c50"/><rect x="525" y="201" width="1" height="2" fill="#4a4c50"/><rect x="537" y="201" width="1" height="2" fill="#4a4c50"/><rect x="549" y="201" width="1" height="2" fill="#4a4c50"/><rect x="561" y="198" width="1" height="7" fill="#4a4c50"/><rect x="573" y="201" width="1" height="2" fill="#4a4c50"/><rect x="585" y="201" width="1" height="2" fill="#4a4c50"/><rect x="597" y="201" width="1" height="2" fill="#4a4c50"/><rect x="621" y="201" width="1" height="2" fill="#4a4c50"/><rect x="633" y="201" width="1" height="2" fill="#4a4c50"/><rect x="645" y="201" width="1" height="2" fill="#4a4c50"/><rect x="657" y="198" width="1" height="7" fill="#4a4c50"/><rect x="669" y="201" width="1" height="2" fill="#4a4c50"/><rect x="681" y="201" width="1" height="2" fill="#4a4c50"/><rect x="693" y="201" width="1" height="2" fill="#4a4c50"/><rect x="717" y="201" width="1" height="2" fill="#4a4c50"/><rect x="729" y="201" width="1" height="2" fill="#4a4c50"/><rect x="741" y="201" width="1" height="2" fill="#4a4c50"/><rect x="753" y="198" width="1" height="7" fill="#4a4c50"/><rect x="765" y="201" width="1" height="2" fill="#4a4c50"/><rect x="777" y="201" width="1" height="2" fill="#4a4c50"/><rect x="789" y="201" width="1" height="2" fill="#4a4c50"/><rect x="813" y="201" width="1" height="2" fill="#4a4c50"/><rect x="825" y="201" width="1" height="2" fill="#4a4c50"/><rect x="837" y="201" width="1" height="2" fill="#4a4c50"/><rect x="849" y="198" width="1" height="7" fill="#4a4c50"/><rect x="861" y="201" width="1" height="2" fill="#4a4c50"/><rect x="873" y="201" width="1" height="2" fill="#4a4c50"/><rect x="885" y="201" width="1" height="2" fill="#4a4c50"/><rect x="909" y="201" width="1" height="2" fill="#4a4c50"/><rect x="921" y="201" width="1" height="2" fill="#4a4c50"/><rect x="933" y="201" width="1" height="2" fill="#4a4c50"/><rect x="945" y="198" width="1" height="7" fill="#4a4c50"/><rect x="957" y="201" width="1" height="2" fill="#4a4c50"/><rect x="969" y="201" width="1" height="2" fill="#4a4c50"/><rect x="981" y="201" width="1" height="2" fill="#4a4c50"/><rect x="1005" y="201" width="1" height="2" fill="#4a4c50"/><rect x="1017" y="201" width="1" height="2" fill="#4a4c50"/></svg>
<div class="t" style="left:317px;width:200px;text-align:center;top:196.0px;font-size:10px;color:#5a6070;">1</div>
<div class="t" style="left:413px;width:200px;text-align:center;top:196.0px;font-size:10px;color:#5a6070;">2</div>
<div class="t" style="left:509px;width:200px;text-align:center;top:196.0px;font-size:10px;color:#5a6070;">3</div>
<div class="t" style="left:605px;width:200px;text-align:center;top:196.0px;font-size:10px;color:#5a6070;">4</div>
<div class="t" style="left:701px;width:200px;text-align:center;top:196.0px;font-size:10px;color:#5a6070;">5</div>
<div class="t" style="left:797px;width:200px;text-align:center;top:196.0px;font-size:10px;color:#5a6070;">6</div>
<div class="t" style="left:893px;width:200px;text-align:center;top:196.0px;font-size:10px;color:#5a6070;">7</div>
<div class="a" style="left:259px;top:227px;width:14px;height:29px;border:1px solid #8c8e92;background:#939598"></div>
<div class="a" style="left:259px;top:277px;width:14px;height:191px;border:1px solid #8c8e92;background:#a7a8aa"></div>
<div class="a" style="left:259px;top:549px;width:14px;height:28px;border:1px solid #8c8e92;background:#a7a8aa"></div>
<div class="a" style="left:259px;top:576px;width:14px;height:30px;border:1px solid #8c8e92;background:#939598"></div>
<svg class="a" style="left:0;top:0" width="1076" height="752"><rect x="265" y="238" width="2" height="1" fill="#3a3c40"/><rect x="265" y="250" width="2" height="1" fill="#3a3c40"/><rect x="265" y="560" width="2" height="1" fill="#3a3c40"/><rect x="265" y="572" width="2" height="1" fill="#3a3c40"/><rect x="265" y="589" width="2" height="1" fill="#3a3c40"/><rect x="265" y="601" width="2" height="1" fill="#3a3c40"/><rect x="265" y="288" width="2" height="1" fill="#3a3c40"/><rect x="265" y="300" width="2" height="1" fill="#3a3c40"/><rect x="265" y="312" width="2" height="1" fill="#3a3c40"/><rect x="263" y="324" width="7" height="1" fill="#3a3c40"/><rect x="265" y="336" width="2" height="1" fill="#3a3c40"/><rect x="265" y="348" width="2" height="1" fill="#3a3c40"/><rect x="265" y="360" width="2" height="1" fill="#3a3c40"/><rect x="265" y="384" width="2" height="1" fill="#3a3c40"/><rect x="265" y="396" width="2" height="1" fill="#3a3c40"/><rect x="265" y="408" width="2" height="1" fill="#3a3c40"/><rect x="263" y="420" width="7" height="1" fill="#3a3c40"/><rect x="265" y="432" width="2" height="1" fill="#3a3c40"/><rect x="265" y="444" width="2" height="1" fill="#3a3c40"/><rect x="265" y="456" width="2" height="1" fill="#3a3c40"/></svg>
<div class="t" style="left:166px;width:200px;text-align:center;top:366.0px;font-size:10px;color:#5a6070;">1</div>
<div class="t" style="left:166px;width:200px;text-align:center;top:462.0px;font-size:10px;color:#5a6070;">2</div>
<svg class="a" style="left:263px;top:263px;" width="7" height="8" viewBox="0 0 7 8"><path d="M0 .5 H7 M0 2.5 H7 M0 4.5 H7 M0 6.5 H7" stroke="#4e5054" stroke-width="1"/></svg>
<svg class="a" style="left:263px;top:474px;" width="7" height="8" viewBox="0 0 7 8"><path d="M0 .5 H7 M0 2.5 H7 M0 4.5 H7 M0 6.5 H7" stroke="#4e5054" stroke-width="1"/></svg>
<svg class="a" style="left:263px;top:494px;" width="7" height="8" viewBox="0 0 7 8"><path d="M0 .5 H7 M0 2.5 H7 M0 4.5 H7 M0 6.5 H7" stroke="#4e5054" stroke-width="1"/></svg>
<svg class="a" style="left:263px;top:515px;" width="7" height="8" viewBox="0 0 7 8"><path d="M0 .5 H7 M0 2.5 H7 M0 4.5 H7 M0 6.5 H7" stroke="#4e5054" stroke-width="1"/></svg>
<svg class="a" style="left:263px;top:535px;" width="7" height="8" viewBox="0 0 7 8"><path d="M0 .5 H7 M0 2.5 H7 M0 4.5 H7 M0 6.5 H7" stroke="#4e5054" stroke-width="1"/></svg>
<div class="a" style="left:276px;top:213px;width:15px;height:393px;background:linear-gradient(90deg,rgba(0,0,0,0),rgba(0,0,0,.07))"></div>
<div class="a" style="left:291px;top:226px;width:722px;height:380px;border:1px solid #6a6c70;background:#a5a5a5"></div>
<div class="a" style="left:292px;top:227px;width:720px;height:29px;background-color:#a5a5a5;background-image:linear-gradient(90deg,#969696 1px,transparent 1px),linear-gradient(#969696 1px,transparent 1px),linear-gradient(90deg,#9c9c9c 1px,transparent 1px),linear-gradient(#9c9c9c 1px,transparent 1px);background-size:48px 48px,48px 48px,12px 12px,12px 12px;background-position:29px 47px,29px 47px,5px 11px,5px 11px"></div>
<div class="a" style="left:292px;top:277px;width:720px;height:191px;background-color:#a5a5a5;background-image:linear-gradient(90deg,#969696 1px,transparent 1px),linear-gradient(#969696 1px,transparent 1px),linear-gradient(90deg,#9c9c9c 1px,transparent 1px),linear-gradient(#9c9c9c 1px,transparent 1px);background-size:48px 48px,48px 48px,12px 12px,12px 12px;background-position:29px 47px,29px 47px,5px 11px,5px 11px"></div>
<div class="a" style="left:292px;top:549px;width:720px;height:28px;background-color:#a5a5a5;background-image:linear-gradient(90deg,#969696 1px,transparent 1px),linear-gradient(#969696 1px,transparent 1px),linear-gradient(90deg,#9c9c9c 1px,transparent 1px),linear-gradient(#9c9c9c 1px,transparent 1px);background-size:48px 48px,48px 48px,12px 12px,12px 12px;background-position:29px 47px,29px 47px,5px 11px,5px 11px"></div>
<div class="a" style="left:292px;top:577px;width:720px;height:28px;background-color:#a5a5a5;background-image:linear-gradient(90deg,#969696 1px,transparent 1px),linear-gradient(#969696 1px,transparent 1px),linear-gradient(90deg,#9c9c9c 1px,transparent 1px),linear-gradient(#9c9c9c 1px,transparent 1px);background-size:48px 48px,48px 48px,12px 12px,12px 12px;background-position:29px 47px,29px 47px,5px 11px,5px 11px"></div>
<div class="a" style="left:321px;top:227px;width:0px;height:378px;border-left:1px dashed #5a5c60"></div>
<div class="a" style="left:292px;top:577px;width:720px;height:0px;border-top:1px dashed #5a5c60"></div>
<div class="a" style="left:292px;top:256px;width:720px;height:21px;border-top:1px solid #8c8e92;border-bottom:1px solid #8c8e92;background:#a6a6a7"></div>
<svg class="a" style="left:297px;top:263px;" width="9" height="7" viewBox="0 0 9 7"><path d="M0 0 H8 L4 6Z" fill="#505256"/></svg>
<div class="t" style="left:330.5px;top:260.3px;font-size:11px;color:#4e5056;">StandardPageHeader [one band per page]</div>
<div class="a" style="left:292px;top:468px;width:720px;height:21px;border-top:1px solid #8c8e92;border-bottom:1px solid #8c8e92;background:#a6a6a7"></div>
<svg class="a" style="left:297px;top:475px;" width="9" height="7" viewBox="0 0 9 7"><path d="M0 0 H8 L4 6Z" fill="#505256"/></svg>
<div class="t" style="left:330.5px;top:472.3px;font-size:11px;color:#4e5056;">StandardGroupHeader</div>
<div class="a" style="left:292px;top:488px;width:720px;height:21px;border-top:1px solid #8c8e92;border-bottom:1px solid #8c8e92;background:#a6a6a7"></div>
<svg class="a" style="left:297px;top:495px;" width="9" height="7" viewBox="0 0 9 7"><path d="M0 0 H8 L4 6Z" fill="#505256"/></svg>
<div class="t" style="left:330.5px;top:492.3px;font-size:11px;color:#4e5056;">StandardDetail</div>
<div class="a" style="left:292px;top:508px;width:720px;height:21px;border-top:1px solid #8c8e92;border-bottom:1px solid #8c8e92;background:#a6a6a7"></div>
<svg class="a" style="left:297px;top:515px;" width="9" height="7" viewBox="0 0 9 7"><path d="M0 0 H8 L4 6Z" fill="#505256"/></svg>
<div class="t" style="left:330.5px;top:512.3px;font-size:11px;color:#4e5056;">StandardGroupFooter</div>
<div class="a" style="left:292px;top:528px;width:720px;height:21px;border-top:1px solid #8c8e92;border-bottom:1px solid #8c8e92;background:#a6a6a7"></div>
<svg class="a" style="left:297px;top:535px;" width="9" height="7" viewBox="0 0 9 7"><path d="M0 0 H8 L4 6Z" fill="#505256"/></svg>
<div class="t" style="left:330.5px;top:532.3px;font-size:11px;color:#4e5056;">StandardPageFooter [one band per page]</div>
<svg class="a" style="left:312px;top:258px;filter:brightness(.7)" width="15" height="16" viewBox="0 0 15 16"><rect x="0.5" y="0.5" width="13" height="14" fill="none" stroke="#4a78b0"/><rect x="2.5" y="3" width="9" height="3.5" fill="#c86a30"/><path d="M0.5 8.5 H13.5 M2.5 0.5 V14.5 M11.5 0.5 V14.5" stroke="#4a78b0" stroke-width=".8"/></svg>
<svg class="a" style="left:311px;top:470px;filter:brightness(.7)" width="16" height="16" viewBox="0 0 16 16"><rect x="1" y="1.5" width="12" height="3.5" fill="#c06a30"/><path d="M4 7.5 H15 M4 9.5 H15" stroke="#505256"/><rect x="1" y="11" width="12" height="4" fill="#707478"/></svg>
<svg class="a" style="left:312px;top:489px;filter:brightness(.7)" width="15" height="16" viewBox="0 0 15 16"><rect x="0.5" y="0.5" width="13" height="15" fill="none" stroke="#4a78b0"/><rect x="2.5" y="2.5" width="9" height="10" fill="none" stroke="#4a78b0" stroke-width=".8"/><path d="M4 5.5 H10 M4 7.5 H10 M4 9.5 H8" stroke="#505256" stroke-width=".8"/></svg>
<svg class="a" style="left:311px;top:510px;filter:brightness(.7)" width="16" height="16" viewBox="0 0 16 16"><rect x="1" y="1" width="12" height="4" fill="#707478"/><path d="M4 6.5 H15 M4 8.5 H15" stroke="#505256"/><rect x="1" y="10.5" width="12" height="4" fill="#4aa030"/></svg>
<svg class="a" style="left:312px;top:529px;filter:brightness(.7)" width="15" height="17" viewBox="0 0 15 17"><rect x="1.5" y="2.5" width="11" height="14" rx="1" fill="none" stroke="#4a78b0"/><rect x="4.5" y="0.5" width="5" height="3" fill="#4a78b0"/><rect x="3.5" y="9" width="7" height="3" fill="#4aa030"/></svg>
<div class="a" style="left:331px;top:276px;width:681px;height:39px;background:#818181"></div>
<div class="a" style="left:331px;top:319px;width:681px;height:6px;background:#8a8a8a"></div>
<div class="a" style="left:331px;top:276px;width:681px;height:90px;overflow:hidden">
<div class="t" style="left:630px;top:14.8px;font-size:31px;color:#0c0c0e">Rep</div>
<div class="t" style="left:606px;top:61.9px;font-size:19px;color:#141416;letter-spacing:-0.8px">Documen</div>
</div>
<div class="a" style="left:331px;top:349px;width:118px;height:109px;border:1px solid #8a8c90;background:#a9a9a9"></div>
<svg class="a" style="left:331px;top:349px;" width="118" height="109" viewBox="0 0 814 752"><g fill="none" stroke="#2b64a0" stroke-width="18" stroke-linecap="round" stroke-linejoin="round">
<path d="M292 58 Q300 40 330 48 Q385 70 412 132 Q360 128 325 108 Q295 85 292 58Z"/>
<path d="M412 132 Q480 150 492 215 Q495 270 440 285 Q395 290 380 292 Q470 290 500 350 Q510 420 440 455 Q380 470 340 430 Q315 395 320 330 Q325 270 360 235 Q395 215 398 185"/>
<path d="M412 132 Q330 130 270 180 Q225 225 232 275 Q240 310 275 300 Q320 280 345 250"/>
<circle cx="278" cy="358" r="28"/>
</g>
<circle cx="428" cy="203" r="8" fill="#2b64a0"/>
<g fill="none" stroke="#2b62a0" stroke-width="13" stroke-linecap="round" stroke-linejoin="round">
<path d="M92 432 Q85 520 88 605 M70 480 Q95 455 140 460 Q175 475 150 510 Q130 525 112 525 Q175 530 172 575 Q165 610 115 612 Q85 610 75 590"/>
<path d="M195 520 Q185 600 215 605 Q245 600 248 525 Q245 580 262 605"/>
<path d="M268 525 Q270 560 268 605 Q275 535 300 530 Q320 535 318 605"/>
<path d="M330 525 Q332 560 330 605 Q337 535 362 530 Q382 535 380 605"/>
<path d="M392 520 Q385 600 415 605 Q445 600 455 525 Q460 620 450 660 Q430 695 395 680 Q380 650 420 630 Q480 610 500 600"/>
<path d="M540 505 Q600 475 606 450 Q602 428 572 445 Q522 490 497 568 Q482 616 522 606 Q548 598 565 612"/>
<path d="M590 525 Q580 600 612 605 Q640 600 645 525 Q645 590 665 608"/>
<path d="M680 525 Q715 560 745 608 M745 525 Q712 565 685 605"/>
</g></svg>
<div class="a" style="left:331px;top:549px;width:681px;height:5px;background:#8a8a8a"></div>
<div class="a" style="left:331px;top:559px;width:681px;height:18px;background:#8f8f8f"></div>
<div class="a" style="left:1010px;top:564px;width:2px;height:10px;background:#7a3a30"></div>
<div class="t" style="left:334px;top:562.3px;font-size:12px;color:#1a1a20;">Date Printed:</div>
<div class="t" style="left:413.5px;top:562.3px;font-size:12px;color:#1a1a20;">Friday,</div>
<div class="a" style="left:1012px;top:213px;width:17px;height:395px;background:#a5a6a9"></div>
<svg class="a" style="left:1016px;top:219px;" width="9" height="6" viewBox="0 0 9 6"><path d="M0 5 L4.5 0 L9 5Z" fill="#505256"/></svg>
<svg class="a" style="left:1016px;top:597px;" width="9" height="6" viewBox="0 0 9 6"><path d="M0 0 L4.5 5 L9 0Z" fill="#505256"/></svg>
<div class="a" style="left:1013px;top:230px;width:15px;height:354px;border:1px solid #8a8c90;border-radius:3px;background:linear-gradient(90deg,#aaabae,#a3a4a7)"></div>
<svg class="a" style="left:1017px;top:402px;" width="7" height="8" viewBox="0 0 7 8"><path d="M0 .5 H7 M0 2.5 H7 M0 4.5 H7 M0 6.5 H7" stroke="#505256"/></svg>
<div class="a" style="left:277px;top:608px;width:735px;height:17px;background:#a5a6a9"></div>
<svg class="a" style="left:283px;top:612px;" width="6" height="9" viewBox="0 0 6 9"><path d="M5 0 V9 L0 4.5Z" fill="#505256"/></svg>
<svg class="a" style="left:1001px;top:612px;" width="6" height="9" viewBox="0 0 6 9"><path d="M0 0 V9 L5 4.5Z" fill="#505256"/></svg>
<div class="a" style="left:294px;top:609px;width:640px;height:15px;border:1px solid #8a8c90;border-radius:3px;background:linear-gradient(#aaabae,#a3a4a7)"></div>
<svg class="a" style="left:265px;top:651px;filter:brightness(.66)" width="15" height="14" viewBox="0 0 15 14"><rect x="0.5" y="0.5" width="14" height="13" fill="#c8d0d8" stroke="#3a5a80"/><rect x="3" y="7.5" width="4" height="3.5" fill="none" stroke="#2a3a60" stroke-width=".9"/><rect x="8" y="2.5" width="4" height="3.5" fill="none" stroke="#2a3a60" stroke-width=".9"/><path d="M5 7.5 V4.5 H8" stroke="#2a3a60" stroke-width=".8" fill="none"/></svg>
<div class="t" style="left:284.5px;top:653.2px;font-size:11px;color:#3a3c44;">dataSet1</div>
<div class="a" style="left:238px;top:681px;width:791px;height:25px;border-top:1px solid #7a7c80;background:linear-gradient(#a3a4a7,#96979a)"></div>
<div class="a" style="left:244px;top:683px;width:72px;height:22px;border:1px solid #a08a50;border-radius:3px;background:linear-gradient(#c4ac6c,#b89e5c)"></div>
<svg class="a" style="left:248px;top:685px;filter:brightness(.66)" width="18" height="18" viewBox="0 0 18 18"><path d="M2 16.5 L16.5 2 V16.5Z" fill="none" stroke="#e08a20" stroke-width="1.6"/><path d="M8.5 13.8 L13.8 8.5 V13.8Z" fill="none" stroke="#e08a20" stroke-width="1.2"/><path d="M2.5 4 L11 13" stroke="#f0c040" stroke-width="3"/><path d="M1.5 2.8 L3.3 4.8" stroke="#e06080" stroke-width="3"/><path d="M11 13 L12.8 15" stroke="#222" stroke-width="2"/></svg>
<div class="t" style="left:267px;top:688.8px;font-size:12px;color:#2a2a30;letter-spacing:-0.25px">Designer</div>
<div class="a" style="left:320px;top:685px;width:1px;height:18px;background:#8a8c90"></div>
<div class="a" style="left:487px;top:685px;width:1px;height:18px;background:#8a8c90"></div>
<div class="a" style="left:557px;top:685px;width:1px;height:18px;background:#8a8c90"></div>
<div class="a" style="left:842px;top:685px;width:1px;height:18px;background:#8a8c90"></div>
<svg class="a" style="left:330px;top:685px;filter:brightness(.66)" width="16" height="18" viewBox="0 0 16 18"><rect x="1.5" y="1.5" width="10" height="13" fill="#e8eef4" stroke="#4a78b0"/><circle cx="10" cy="11" r="3.5" fill="#d8e8f0" stroke="#333" stroke-width=".9"/><path d="M7.5 13.5 L3 17.5" stroke="#c86a20" stroke-width="2"/></svg>
<div class="t" style="left:348.5px;top:688.3px;font-size:12px;color:#2a2a30;letter-spacing:-0.3px">Preview</div>
<svg class="a" style="left:396px;top:685px;filter:brightness(.66)" width="20" height="18" viewBox="0 0 20 18"><rect x="5.5" y="1.5" width="10" height="13" fill="#e8eef4" stroke="#4a78b0"/><circle cx="5" cy="7" r="4" fill="#4a9a40" stroke="#1a5a8a" stroke-width=".9"/><circle cx="13" cy="11" r="3.5" fill="#d8e8f0" stroke="#333" stroke-width=".9"/><path d="M10.5 13.5 L7 17.5" stroke="#c86a20" stroke-width="2"/></svg>
<div class="t" style="left:417px;top:688.3px;font-size:12px;color:#2a2a30;">HTML View</div>
<svg class="a" style="left:493px;top:684px;filter:brightness(.66)" width="17" height="19" viewBox="0 0 17 19"><rect x="5.5" y="1.5" width="10" height="15" fill="#e8eef4" stroke="#4a78b0"/><path d="M9 4 Q7.5 4 7.5 6 V8 L6.5 9 L7.5 10 V12 Q7.5 14 9 14 M12 4 Q13.5 4 13.5 6 V8 L14.5 9 L13.5 10 V12 Q13.5 14 12 14" fill="none" stroke="#2a4a80" stroke-width=".9"/><path d="M1 6 L9 17" stroke="#f0c040" stroke-width="3"/><path d="M1 6 L2.5 8" stroke="#e06080" stroke-width="3"/></svg>
<div class="t" style="left:513px;top:688.3px;font-size:12px;color:#2a2a30;letter-spacing:-0.2px">Scripts</div>
<div class="t" style="left:567px;top:688.3px;font-size:12px;color:#2a2a30;letter-spacing:-0.1px">ReportTemplate { PaperKind: Letter }</div>
<div class="t" style="left:848px;top:688.3px;font-size:12px;color:#2a2a30;">100%</div>
<svg class="a" style="left:882px;top:686px;" width="18" height="17" viewBox="0 0 18 17"><circle cx="8.5" cy="8.5" r="7.8" fill="#a4a5a8" stroke="#6a6c72"/><rect x="4.5" y="7.5" width="8" height="2" fill="#4a4c52"/></svg>
<div class="a" style="left:906px;top:693px;width:95px;height:1px;background:#85878b"></div>
<div class="a" style="left:906px;top:693px;width:44px;height:1px;background:#4a6888"></div>
<svg class="a" style="left:948px;top:686px;" width="10" height="16" viewBox="0 0 10 16"><path d="M0.5 0.5 H9.5 V10 L5 15 L0.5 10Z" fill="#a89a68" stroke="#8a7a40"/></svg>
<svg class="a" style="left:1006px;top:686px;" width="18" height="17" viewBox="0 0 18 17"><circle cx="8.5" cy="8.5" r="7.8" fill="#a4a5a8" stroke="#6a6c72"/><rect x="4.5" y="7.5" width="8" height="2" fill="#4a4c52"/><rect x="7.5" y="4.5" width="2" height="8" fill="#4a4c52"/></svg>
<div class="a" style="left:1040px;top:154px;width:24px;height:99px;border:1px solid #7a7c80;border-radius:0;background:linear-gradient(90deg,#a0a1a4,#9b9c9f)"></div>
<svg class="a" style="left:1044px;top:161px;filter:brightness(.66)" width="17" height="16" viewBox="0 0 17 16"><rect x="1.5" y="1.5" width="13" height="11" fill="#e8eef4" stroke="#4a78b0"/><path d="M3.5 4.5 H8 M3.5 7 H8 M3.5 9.5 H8" stroke="#5a6a80"/><path d="M9 7 Q11 3 14 7 L15 12 Q13 15 10 14Z" fill="#e0a060" stroke="#6a4010" stroke-width=".6"/><rect x="9" y="13" width="6" height="3" fill="#2a70c0"/></svg>
<div class="t" style="left:1043px;top:179px;font-size:11px;color:#2a2c34;transform-origin:0 0;transform:translate(16px,0) rotate(90deg)">Property Grid</div>
<div class="a" style="left:1040px;top:259px;width:24px;height:109px;border:1px solid #7a7c80;border-radius:0;background:linear-gradient(90deg,#a0a1a4,#9b9c9f)"></div>
<svg class="a" style="left:1044px;top:266px;filter:brightness(.66)" width="17" height="16" viewBox="0 0 17 16"><rect x="5.5" y="1.5" width="9" height="8" fill="#d8dde2" stroke="#4a5a70"/><rect x="8.5" y="5.5" width="7" height="6" fill="#c8d8e8" stroke="#2a70c0"/><circle cx="5" cy="12" r="3.5" fill="#e07030"/><rect x="0.5" y="6.5" width="7" height="7" fill="#40a030" stroke="#206010"/></svg>
<div class="t" style="left:1043px;top:284px;font-size:11px;color:#2a2c34;transform-origin:0 0;transform:translate(16px,0) rotate(90deg)">Layout Explorer</div>
<div class="a" style="left:1040px;top:374px;width:24px;height:76px;border:1px solid #7a7c80;border-radius:0;background:linear-gradient(90deg,#a0a1a4,#9b9c9f)"></div>
<svg class="a" style="left:1044px;top:381px;filter:brightness(.66)" width="17" height="16" viewBox="0 0 17 16"><rect x="1.5" y="5.5" width="6" height="9" fill="#d0e0f0" stroke="#2a70c0"/><path d="M4 1.5 H13 Q15 1.5 15 4 V10 H9 V5.5 H4Z" fill="#e8a030" stroke="#7a4a10" stroke-width=".9"/><rect x="1.5" y="9.5" width="6" height=".8" fill="#2a70c0"/></svg>
<div class="t" style="left:1043px;top:399px;font-size:11px;color:#2a2c34;transform-origin:0 0;transform:translate(16px,0) rotate(90deg)">Field List</div>
<div class="a" style="left:1040px;top:456px;width:24px;height:76px;border:1px solid #7a7c80;border-radius:0;background:linear-gradient(90deg,#a0a1a4,#9b9c9f)"></div>
<svg class="a" style="left:1044px;top:463px;filter:brightness(.66)" width="17" height="16" viewBox="0 0 17 16"><path d="M2 14 L11 4" stroke="#2a70c0" stroke-width="2.6"/><path d="M10 1 Q14 1 14 5 L12 4 L11 6 L13 7 Q10 9 9 5Z" fill="#8a8a8a" stroke="#333" stroke-width=".6"/><path d="M3 2 L13 13" stroke="#8a8a8a" stroke-width="2.2"/><path d="M2 1 L5 3 L3 5Z" fill="#555"/></svg>
<div class="t" style="left:1043px;top:481px;font-size:11px;color:#2a2c34;transform-origin:0 0;transform:translate(16px,0) rotate(90deg)">Tool Box</div>
<div class="a" style="left:449px;top:219px;width:504px;height:464px;border:1px solid #3c4046;border-radius:5px;background:#fdfdfe"></div>
<div class="a" style="left:451px;top:221px;width:500px;height:460px;border-radius:3px;background:linear-gradient(#f0f2f5,#e6e9ed 27px,#e3e7eb 29px,#e9ecef 30px)"></div>
<svg class="a" style="left:457px;top:227px;" width="16" height="15" viewBox="0 0 16 15"><g transform="translate(0.7,0.3) scale(0.57) translate(-4.6,-5)" fill="none" stroke="#1a62c0" stroke-width="2.6"><ellipse cx="14.6" cy="18.6" rx="7.9" ry="3.3"/><ellipse cx="27.1" cy="12.8" rx="7.6" ry="3.3" transform="rotate(-50.6 27.1 12.8)"/><ellipse cx="26.9" cy="24.4" rx="7.4" ry="3.3" transform="rotate(52 26.9 24.4)"/></g></svg>
<div class="t" style="left:593px;width:200px;text-align:center;top:227.7px;font-size:11px;color:#2a2c32;letter-spacing:-0.2px">Report Subcategory</div>
<svg class="a" style="left:924px;top:228px;" width="13" height="11" viewBox="0 0 13 11"><path d="M2 2 L11 9 M11 2 L2 9" stroke="#3a3c42" stroke-width="3.4" stroke-linecap="round"/><path d="M2 2 L11 9 M11 2 L2 9" stroke="#f4f5f7" stroke-width="1.6" stroke-linecap="round"/></svg>
<div class="a" style="left:456px;top:249px;width:1px;height:403px;background:#8d9197"></div>
<div class="a" style="left:945px;top:249px;width:1px;height:403px;background:#8d9197"></div>
<div class="a" style="left:469px;top:261px;width:56px;height:55px;border:1px solid #a4a9af;background:#fff"></div>
<svg class="a" style="left:480px;top:274px;" width="34" height="28" viewBox="0 0 34 28"><defs><linearGradient id="fb" x1="0" y1="0" x2="0" y2="1"><stop offset="0" stop-color="#9cd0fa"/><stop offset="1" stop-color="#1a78d8"/></linearGradient><linearGradient id="fy" x1="0" y1="0" x2="0" y2="1"><stop offset="0" stop-color="#fff2b8"/><stop offset="1" stop-color="#f0d888"/></linearGradient></defs>
<path d="M1.5 4 Q1.5 1.5 4 1.5 H11 L13 3.5 H26 V21 H1.5Z" fill="#7ab8f0" stroke="#2a2a2a"/>
<path d="M11 8 Q11 6 13 6 H19 L21 8 H31.5 V24.5 H11Z" fill="url(#fy)" stroke="#2a2a2a"/>
<path d="M1.5 13.5 H25.5 V26.5 H1.5Z" fill="url(#fb)" stroke="#2a2a2a"/></svg>
<div class="t" style="left:539px;top:262.8px;font-size:12px;color:#33343a;font-weight:bold;letter-spacing:-0.3px">Subcategory</div>
<div class="t" style="left:539px;top:280.7px;font-size:11px;color:#33343a;letter-spacing:-0.05px">Set your report's subcategory.</div>
<div class="a" style="left:469px;top:330px;width:464px;height:309px;border:1px solid #9da2a9;background:#fff"></div>
<div class="a" style="left:470px;top:331px;width:16px;height:125px;background:#eef0f2"></div>
<div class="a" style="left:470px;top:331px;width:462px;height:20px;background:linear-gradient(#f6f7f9,#e8ebef)"></div>
<div class="a" style="left:470px;top:350px;width:462px;height:1px;background:#aeb3b9"></div>
<div class="a" style="left:485px;top:331px;width:1px;height:125px;background:#aeb3b9"></div>
<div class="a" style="left:470px;top:371px;width:462px;height:1px;background:#d5d9de"></div>
<div class="a" style="left:470px;top:392px;width:462px;height:1px;background:#d5d9de"></div>
<div class="a" style="left:470px;top:413px;width:462px;height:1px;background:#d5d9de"></div>
<div class="a" style="left:470px;top:434px;width:462px;height:1px;background:#d5d9de"></div>
<div class="a" style="left:470px;top:455px;width:462px;height:1px;background:#d5d9de"></div>
<div class="a" style="left:470px;top:371px;width:16px;height:1px;background:#aeb3b9"></div>
<div class="a" style="left:470px;top:392px;width:16px;height:1px;background:#aeb3b9"></div>
<div class="a" style="left:470px;top:413px;width:16px;height:1px;background:#aeb3b9"></div>
<div class="a" style="left:470px;top:434px;width:16px;height:1px;background:#aeb3b9"></div>
<div class="t" style="left:489px;top:334.2px;font-size:11px;color:#3a3c44;letter-spacing:-0.1px">Subcategory</div>
<div class="t" style="left:489px;top:354.5px;font-size:11.5px;color:#1e1f24;letter-spacing:-0.35px">Invoice</div>
<div class="t" style="left:489px;top:375.5px;font-size:11.5px;color:#1e1f24;letter-spacing:-0.35px">Connected Sale</div>
<div class="t" style="left:489px;top:396.5px;font-size:11.5px;color:#1e1f24;letter-spacing:-0.35px">Receipt</div>
<div class="t" style="left:489px;top:417.5px;font-size:11.5px;color:#1e1f24;letter-spacing:-0.35px">Credit Card</div>
<div class="a" style="left:486px;top:414px;width:413px;height:21px;border:1px dotted #1a1a1a"></div>
<div class="a" style="left:898px;top:415px;width:16px;height:19px;border:1px solid #c4c8cd;background:linear-gradient(#f4f5f7,#e8eaed)"></div>
<div class="a" style="left:913px;top:415px;width:17px;height:19px;border:1px solid #c4c8cd;background:linear-gradient(#f4f5f7,#e8eaed)"></div>
<svg class="a" style="left:901px;top:419px;" width="10" height="10" viewBox="0 0 10 10"><path d="M1 1 L9 9 M9 1 L1 9" stroke="#3a3c42" stroke-width="1.5"/></svg>
<svg class="a" style="left:918px;top:422px;" width="8" height="4" viewBox="0 0 8 4"><path d="M0 0 H7 L3.5 3.5Z" fill="#3a3c42"/></svg>
<svg class="a" style="left:474px;top:419px;" width="6" height="10" viewBox="0 0 6 10"><path d="M1 1 V9 L5 5Z" fill="#6a6e76"/></svg>
<svg class="a" style="left:473px;top:441px;" width="9" height="9" viewBox="0 0 9 9"><path d="M4.5 0.5 V8.5 M0.5 4.5 H8.5 M1.5 1.5 L7.5 7.5 M7.5 1.5 L1.5 7.5" stroke="#a0a4aa" stroke-width=".9"/></svg>
<div class="a" style="left:456px;top:651px;width:490px;height:1px;background:#7d8187"></div>
<div class="a" style="left:457px;top:652px;width:488px;height:24px;border-bottom:1px solid #8d9197;background:linear-gradient(#eaedf0,#dadde1 50%,#c9ccd0)"></div>
<div class="a" style="left:821px;top:655px;width:1px;height:18px;background:#b8bcc2"></div>
<div class="a" style="left:875px;top:655px;width:1px;height:18px;background:#b8bcc2"></div>
<svg class="a" style="left:831px;top:657px;" width="15" height="13" viewBox="0 0 15 13"><defs><linearGradient id="ckg" x1="0" y1="0" x2="0" y2="1"><stop offset="0" stop-color="#90e870"/><stop offset="1" stop-color="#30a020"/></linearGradient></defs><path d="M0.8 6.5 L3 4.5 L5.5 7 L12 0.8 L14.2 3 L5.5 11.8Z" fill="url(#ckg)" stroke="#3a5a30" stroke-width=".8" stroke-linejoin="round"/></svg>
<div class="t" style="left:851px;top:658.0px;font-size:11.5px;color:#2a2c34;">OK</div>
<svg class="a" style="left:883px;top:656px;" width="16" height="16" viewBox="0 0 16 16"><circle cx="8" cy="8" r="6.3" fill="none" stroke="#e04018" stroke-width="2.6"/><path d="M3.8 3.8 L12.2 12.2" stroke="#e04018" stroke-width="2.6"/></svg>
<div class="t" style="left:904px;top:658.2px;font-size:11px;color:#2a2c34;">Cancel</div>
</body></html>
